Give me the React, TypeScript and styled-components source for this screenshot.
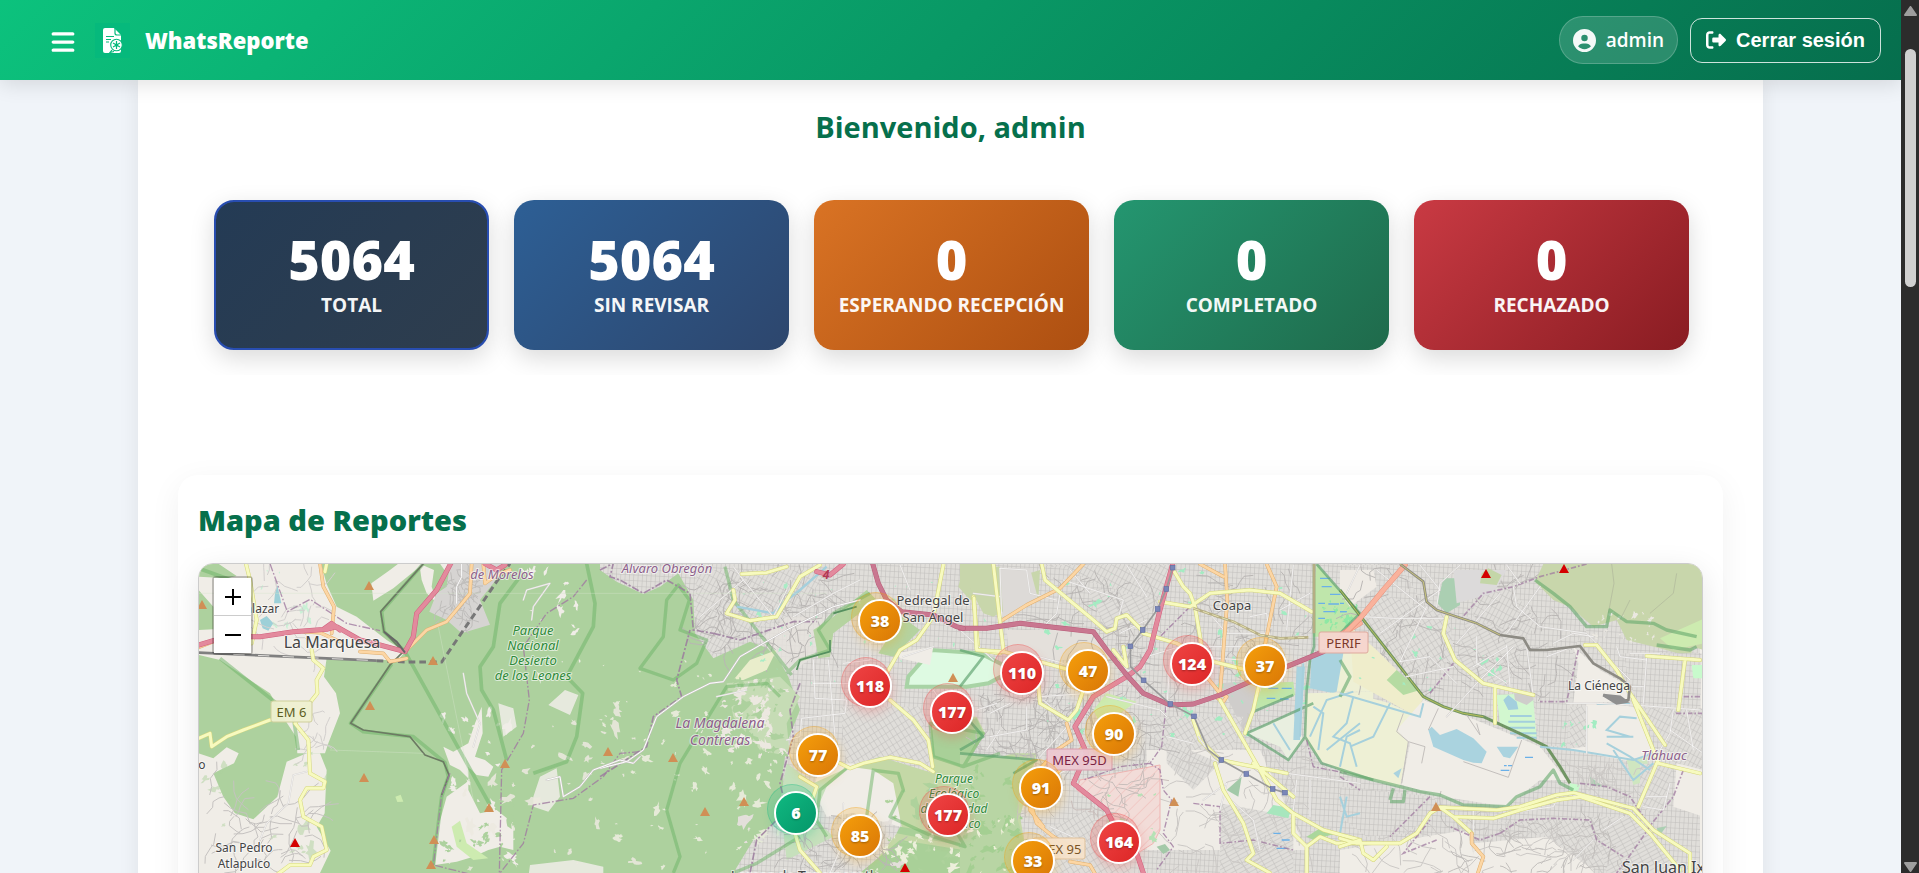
import React from "react";
import styled, { createGlobalStyle } from "styled-components";
import { FaBars, FaCircleUser, FaRightFromBracket } from "react-icons/fa6";

const sans = `"Open Sans", "Noto Sans", "Liberation Sans", sans-serif`;

const GlobalStyle = createGlobalStyle`
  *, *::before, *::after { box-sizing: border-box; }
  body { margin: 0; font-family: ${sans}; background: #f0f4f9; color: #333; }
  h1, h2, p, ul { margin: 0; padding: 0; }
`;

const Shell = styled.div`
  display: grid;
  grid-template-columns: minmax(0, 1fr) 18px;
  height: 100vh;
  overflow: hidden;
`;

const Page = styled.div`
  display: flex;
  flex-direction: column;
  min-width: 0;
  height: 100vh;
  overflow: hidden;
`;

const Header = styled.header`
  position: relative;
  z-index: 5;
  flex: none;
  display: flex;
  align-items: center;
  justify-content: space-between;
  height: 80px;
  padding: 0 20px 0 40px;
  color: #fff;
  background: linear-gradient(135deg, #0cc27d 0%, #066e4d 100%);
  box-shadow: 0 4px 20px rgba(0, 0, 0, 0.12);
`;

const HeaderGroup = styled.div<{ $gap: number }>`
  display: flex;
  align-items: center;
  gap: ${(p) => p.$gap}px;
`;

const MenuButton = styled.button`
  display: flex;
  padding: 14px 10px 10px;
  border: 0;
  background: none;
  color: #fff;
  font-size: 26px;
  cursor: pointer;
`;

const Brand = styled.a`
  display: flex;
  align-items: center;
  gap: 15px;
  color: #fff;
  font-size: 22px;
  font-weight: 800;
  line-height: 30px;
  text-decoration: none;
`;

const UserPill = styled.div`
  display: flex;
  align-items: center;
  gap: 10px;
  height: 48px;
  padding: 0 13px;
  border: 1px solid rgba(255, 255, 255, 0.2);
  border-radius: 25px;
  background: rgba(255, 255, 255, 0.15);
  font-size: 19px;
  font-weight: 600;

  svg { font-size: 23px; opacity: 0.95; }
`;

const LogoutButton = styled.button`
  display: flex;
  align-items: center;
  gap: 10px;
  height: 45px;
  padding: 0 15px;
  border: 1px solid rgba(255, 255, 255, 0.8);
  border-radius: 12px;
  background: transparent;
  color: #fff;
  font: bold 20px "Liberation Sans", Arial, sans-serif;
  cursor: pointer;
`;

const Scroll = styled.div`
  flex: 1;
  min-height: 0;
  overflow: hidden;
`;

const Content = styled.main`
  margin: 0 138px;
  padding: 24px 40px 40px;
  background: #fff;
  box-shadow: 0 0 20px rgba(0, 0, 0, 0.08);
`;

const Welcome = styled.h2`
  color: #06704c;
  font-size: 29px;
  font-weight: 700;
  line-height: 46px;
  text-align: center;
`;

const Stats = styled.section`
  display: grid;
  grid-template-columns: repeat(5, minmax(0, 1fr));
  gap: 25px;
  margin-top: 25px;
  padding: 25px 34px 25px 36px;
  overflow: hidden;
`;

const StatCard = styled.button<{ $from: string; $to: string; $active?: boolean }>`
  display: flex;
  flex-direction: column;
  align-items: center;
  justify-content: center;
  height: 150px;
  padding: 0 8px;
  border: 2px solid ${(p) => (p.$active ? "#284db0" : "transparent")};
  border-radius: 20px;
  background: linear-gradient(135deg, ${(p) => p.$from}, ${(p) => p.$to}) border-box;
  ${(p) => p.$active && `background: linear-gradient(135deg, ${p.$from}, ${p.$to}) padding-box, #284db0 border-box;`}
  box-shadow: 0 8px 25px rgba(0, 0, 0, 0.15);
  color: #fff;
  font-family: inherit;
  cursor: pointer;
`;

const StatValue = styled.span`
  font-size: 54px;
  font-weight: 800;
  line-height: 56px;
`;

const StatLabel = styled.span`
  margin-top: 4px;
  font-size: 19px;
  font-weight: 700;
  line-height: 28px;
  opacity: 0.95;
  white-space: nowrap;
`;

const MapCard = styled.section`
  margin-top: 100px;
  padding: 20px;
  border-radius: 20px;
  background: #fff;
  box-shadow: 0 8px 32px rgba(0, 0, 0, 0.06);
`;

const MapTitle = styled.h2`
  margin-bottom: 18px;
  color: #06704c;
  font-size: 29px;
  font-weight: 800;
  line-height: 50px;
`;

const MapFrame = styled.div`
  position: relative;
  height: 600px;
  overflow: hidden;
  border: 1px solid #ccc;
  border-radius: 15px;
  background: #f2efe9;
`;

const MapShadow = styled.div`
  border-radius: 15px;
  box-shadow: 0 8px 30px rgba(0, 0, 0, 0.1);
`;

const MapDrawing = styled.svg`
  display: block;
  width: 100%;
  height: 100%;
`;

const ZoomControl = styled.div`
  position: absolute;
  top: 12px;
  left: 13px;
  display: flex;
  flex-direction: column;
  border: 2px solid rgba(0, 0, 0, 0.22);
  border-radius: 4px;
  background-clip: padding-box;
`;

const ZoomButton = styled.button`
  width: 37px;
  height: 38px;
  padding: 0;
  border: 0;
  border-bottom: 1px solid #ccc;
  background: #fff;
  color: #000;
  display: grid;
  place-items: center;
  cursor: pointer;
  &:last-child { height: 37px; border-bottom: 0; }
`;

const tones = {
  red: { a: "#ef4444", b: "#dc2626", rgb: "239, 68, 68" },
  orange: { a: "#f59e0b", b: "#d97706", rgb: "245, 158, 11" },
  green: { a: "#10b981", b: "#059669", rgb: "16, 185, 129" },
};
type Tone = keyof typeof tones;

const Cluster = styled.button<{ $x: number; $y: number; $tone: Tone }>`
  position: absolute;
  left: ${(p) => p.$x}px;
  top: ${(p) => p.$y}px;
  width: 50px;
  height: 50px;
  padding: 6px 0 0 6px;
  border: 1px solid rgba(${(p) => tones[p.$tone].rgb}, 0.3);
  border-radius: 50%;
  background: rgba(${(p) => tones[p.$tone].rgb}, 0.18);
  cursor: pointer;

  span {
    display: grid;
    place-items: center;
    width: 44px;
    height: 44px;
    border: 2px solid #fff;
    border-radius: 50%;
    background: linear-gradient(135deg, ${(p) => tones[p.$tone].a}, ${(p) => tones[p.$tone].b});
    box-shadow: 0 4px 12px rgba(${(p) => tones[p.$tone].rgb}, 0.3);
    color: #fff;
    font: 800 16px ${sans};
    text-shadow: 0 1px 2px rgba(0, 0, 0, 0.3);
  }
`;

const ScrollRail = styled.aside`
  display: flex;
  flex-direction: column;
  align-items: center;
  justify-content: space-between;
  padding: 6px 0 1px;
  background: #2c2c2c;
`;

const Thumb = styled.div`
  width: 11px;
  height: 238px;
  margin: 33px 0 auto;
  border-radius: 6px;
  background: #d0d0d0;
`;

function Logo() {
  return (
    <svg width="35" height="35" viewBox="0 0 35 35" aria-hidden="true">
      <rect width="35" height="35" fill="#06b97c" />
      <path d="M10 5h9l7 7v16q0 2-2 2H10q-2 0-2-2V7q0-2 2-2z" fill="#fff" />
      <path d="M20 4v6q0 2 2 2h5" fill="none" stroke="#06b97c" strokeWidth="1.2" />
      <path d="M11 13.500h8M11 16.500h5M11 19h3" stroke="#06b97c" strokeWidth="1" />
      <circle cx="21.500" cy="22" r="5.800" fill="#fff" stroke="#06b97c" strokeWidth="1.100" />
      <path d="M21.500 18v8M18 20l7 4M25 20l-7 4M17 27l-2 2.500 4-1" stroke="#06b97c" strokeWidth="1.200" fill="none" />
      <circle cx="21.500" cy="22" r="1.600" fill="#06b97c" />
    </svg>
  );
}

/* ---------- Map drawing ---------- */

/* The map is drawn sheet by sheet; each sheet has its own origin and a 3:1 scale. */
const sheets = { west: "160 460", centre: "600 550", south: "960 550", east: "1340 550" };
type SheetName = keyof typeof sheets;

function Sheet({ at, children }: { at: SheetName; children: React.ReactNode }) {
  return <g transform={`translate(${sheets[at]}) scale(0.33333)`}>{children}</g>;
}

const roadKinds = {
  motorway: ["#d0607e", "#e38a9d", 15],
  ring: ["#b85c78", "#c97790", 15],
  trunk: ["#e8907a", "#f9b29c", 16],
  primary: ["#dfae6e", "#fcd6a4", 11],
  secondary: ["#d5d67c", "#f7fabf", 12],
  minor: ["#c9c6c4", "#ffffff", 6],
  lane: ["#d5d2cf", "#ffffff", 5],
} as const;

function Road({ kind, d }: { kind: keyof typeof roadKinds; d: string }) {
  const [edge, fill, w] = roadKinds[kind];
  return (
    <g fill="none" strokeLinejoin="round" strokeLinecap="round">
      <path d={d} stroke={edge} strokeWidth={w} />
      <path d={d} stroke={fill} strokeWidth={w - 3} />
    </g>
  );
}

/* Seeded generator, so that clearings and lanes are the same at each render. */
function makeRandom(seed: number) {
  let s = seed * 7919 + 13;
  return () => {
    s = (s * 16807) % 2147483647;
    return s / 2147483647;
  };
}

function blobs(seed: number, n: number, x0: number, y0: number, x1: number, y1: number, size: number) {
  const r = makeRandom(seed);
  let d = "";
  for (let i = 0; i < n; i++) {
    const cx = x0 + r() * (x1 - x0);
    const cy = y0 + r() * (y1 - y0);
    const k = size * (0.25 + r() * r() * 1.7);
    const tilt = r() * 3.1;
    for (let j = 0; j < 13; j++) {
      const a = (j / 13) * Math.PI * 2;
      const q = k * (0.3 + r() * 1.1);
      const u = Math.cos(a) * q * 1.4;
      const v = Math.sin(a) * q * 0.8;
      d += `${j ? "L" : "M"}${(cx + u * Math.cos(tilt) - v * Math.sin(tilt)).toFixed(0)} ${(cy + u * Math.sin(tilt) + v * Math.cos(tilt)).toFixed(0)}`;
    }
    d += "Z";
  }
  return d;
}

function lanes(seed: number, n: number, x0: number, y0: number, x1: number, y1: number, len: number) {
  const r = makeRandom(seed);
  let d = "";
  for (let i = 0; i < n; i++) {
    let x = x0 + r() * (x1 - x0);
    let y = y0 + r() * (y1 - y0);
    let a = r() * 6.28;
    d += `M${x.toFixed(0)} ${y.toFixed(0)}`;
    for (let j = 0; j < 4; j++) {
      a += (r() - 0.5) * 1.6;
      x += Math.cos(a) * len * (0.4 + r());
      y += Math.sin(a) * len * (0.4 + r());
      d += `L${x.toFixed(0)} ${y.toFixed(0)}`;
    }
  }
  return d;
}

function Grid({ id, angle, w, h }: { id: string; angle: number; w: number; h: number }) {
  return (
    <pattern id={id} width={w} height={h} patternUnits="userSpaceOnUse" patternTransform={`rotate(${angle})`}>
      <rect width={w} height={h} fill="#e0deda" />
      <path d={`M0 0H${w}M0 0V${h}`} stroke="#bfbdbb" strokeWidth="3" />
    </pattern>
  );
}

const peaks: [number, number, string?][] = [
  [369, 585], [202, 604], [433, 660], [370, 705], [364, 777], [505, 763], [489, 807], [434, 839], [431, 864],
  [608, 751], [673, 757], [705, 811], [744, 801], [953, 677], [1174, 801], [1436, 806],
  [295, 842, "#d40000"], [905, 867, "#d40000"], [1486, 573, "#d40000"], [1564, 568, "#d40000"],
];

const stations = "M638 53L619 117L593 177L548 240L511 289L512 350L551 391L631 462L702 499L745 600L784 630L859 672L938 717L975 728";
const stationDots = [[638, 53], [619, 117], [593, 177], [548, 240], [511, 289], [551, 391], [631, 462], [702, 499], [784, 630], [859, 672], [938, 717], [975, 728]];

interface LabelProps { x: number; y: number; size: number; fill?: string; italic?: boolean; lines: string[]; step?: number; anchor?: "start" | "middle" }
function Label({ x, y, size, fill = "#444", italic, lines, step = 15, anchor = "middle" }: LabelProps) {
  return (
    <text
      x={x} y={y} fontSize={size} fill={fill} textAnchor={anchor} fontStyle={italic ? "italic" : "normal"}
      stroke="#fff" strokeOpacity="0.6" strokeWidth="2" paintOrder="stroke" strokeLinejoin="round"
    >
      {lines.map((t, i) => <tspan key={t} x={x} y={y + i * step}>{t}</tspan>)}
    </text>
  );
}

function Shield({ x, y, w, text, fill, edge, ink }: { x: number; y: number; w: number; text: string; fill: string; edge: string; ink: string }) {
  return (
    <g>
      <rect x={x} y={y} width={w} height="21" rx="2" fill={fill} fillOpacity="0.95" stroke={edge} />
      <text x={x + w / 2} y={y + 16} fontSize="13" textAnchor="middle" fill={ink}>{text}</text>
    </g>
  );
}

function TerrainMap() {
  return (
    <MapDrawing viewBox="199 564 1503 598" preserveAspectRatio="xMinYMin slice" role="img" aria-label="Mapa" fontFamily={`"Noto Sans", sans-serif`}>
      <defs>
        <Grid id="g0" angle={3} w={13} h={17} />
        <Grid id="g1" angle={28} w={12} h={22} />
        <Grid id="g2" angle={-32} w={14} h={20} />
        <Grid id="g3" angle={62} w={12} h={28} />
        <pattern id="hatch" width="26" height="26" patternUnits="userSpaceOnUse" patternTransform="rotate(45)">
          <rect width="26" height="26" fill="#f2dcd8" />
          <path d="M0 0V26" stroke="#efb8b4" strokeWidth="3" />
        </pattern>
      </defs>
      <rect x="190" y="550" width="1530" height="620" fill="#f0ede7" />

      {/* Land cover */}
      <Sheet at="west">
        <path d="M116 311H2000V1900H116Z" fill="#add19e" />
        <path d="M175 311H483L500 372L530 440L590 470L680 540L735 575L715 600L600 600L500 595L492 650L528 700L540 760L505 850L495 880L412 880L408 830L375 780L330 700L180 600L116 585V510L160 508V440L116 390V350L200 355L230 348Z" fill="#f0ede7" />
        <path d="M116 880L160 895L200 862L236 880L222 910L160 940L190 1010L225 1060L280 1078L352 1010L380 905L440 880L480 880L500 930L494 1060L470 1100L512 1172L480 1239L300 1500H116Z" fill="#f0ede7" />
        <path d="M634 370L690 330L715 311H790L700 385L640 422ZM778 311L822 330L815 380L832 430L800 400L785 360ZM840 311L870 311L860 340Z" fill="#f0ede7" />
        <path d="M870 311H1035L1000 370L960 420L990 494L905 520L860 480L808 455L830 400L860 380Z" fill="#d6d4d2" />
        <path d="M850 860L880 875L925 850L945 790L965 740L968 820L945 890L975 900L1000 920L985 950L950 945L925 920L925 990L960 1060L1010 1050L1060 1090L1060 1170L1020 1160L985 1170L940 1190L890 1205L825 1215L835 1100L860 1010L930 960L900 930L870 915Z" fill="#f0ede7" />
        <path d="M875 1100L900 1082L920 1150L985 1195L940 1200L890 1160ZM706 1010L722 1004L730 1025L712 1026Z" fill="#cdebb0" />
        <path d="M1120 1010L1140 950L1190 925L1200 1010L1165 1055L1120 1040ZM1015 730L1060 745L1070 800L1030 830ZM1165 735L1215 690L1255 705L1230 765ZM1110 1215L1240 1200L1330 1220L1330 1290H1100Z" fill="#f0ede7" opacity="0.85" />
        <path d={blobs(7, 36, 870, 740, 1440, 1230, 12)} fill="#ece9df" opacity="0.85" />
        <path d={blobs(8, 30, 850, 760, 1080, 1210, 12)} fill="#f0ede7" />
        <path d={blobs(9, 18, 850, 960, 1080, 1210, 11)} fill="#add19e" />
        <path d={blobs(19, 16, 1080, 330, 1290, 690, 8)} fill="#f0ede7" />
        <path d={blobs(3, 16, 120, 860, 500, 1220, 12)} fill="#add19e" opacity="0.5" />
        <path d={blobs(31, 12, 300, 330, 460, 520, 9)} fill="#c9f0d5" />
        <path d="M300 480L320 468L340 490L325 512L308 505ZM345 400L352 375L364 430L342 430Z" fill="#9dd0d8" />
        <path d={lanes(11, 40, 130, 1000, 470, 1230, 26)} fill="none" stroke="#c5c2c0" strokeWidth="3" />
        <path d={lanes(12, 26, 300, 330, 480, 580, 22)} fill="none" stroke="#d2cfcd" strokeWidth="3" />
        <path d={lanes(14, 12, 430, 750, 500, 870, 18)} fill="none" stroke="#d2cfcd" strokeWidth="3" />
        <path d={lanes(13, 44, 850, 330, 960, 490, 14)} fill="none" stroke="#bfbdbb" strokeWidth="3" />
      </Sheet>
      <Sheet at="centre">
        <path d="M0 40H3300V1900H1100L560 1400L400 969L460 870L555 790L548 670L560 580L600 480L565 380L520 300L450 275L340 325L285 250L280 150L235 70L180 110L130 132L50 95L0 60Z" fill="url(#g0)" />
        <path d="M290 60H700L560 200L400 260L340 320L285 240Z" fill="url(#g1)" />
        <path d="M720 470H960L1000 640L740 650Z" fill="url(#g2)" />
        <path d="M480 270L560 200L690 200L640 320L570 370Z" fill="#e6e2dd" opacity="0.8" />
        <path d={lanes(81, 60, 300, 60, 680, 320, 26)} fill="none" stroke="#b9b6b4" strokeWidth="3" />
        <path d="M400 390L450 330L530 300L500 360L430 390Z" fill="#e9edcb" />
        <path d="M380 400L540 380L600 440L560 520L570 620L480 600L400 500Z" fill="#c6dcb5" />
        <path d={blobs(41, 60, 370, 390, 560, 620, 12)} fill="#ece8e0" />
        <path d={blobs(42, 30, 370, 390, 560, 620, 12)} fill="#add19e" />
        <path d={blobs(43, 40, 0, 330, 340, 969, 9)} fill="#e6ead8" />
        <path d={blobs(44, 20, 380, 600, 560, 900, 12)} fill="#e6ead8" />
        <path d="M835 310L905 200L960 240L880 320ZM640 240L700 200L800 120L830 150L700 250L690 320L655 325Z" fill="#b5d3a0" />
        <path d="M660 650L750 640L880 660L905 700L900 830L760 790L680 800L640 720Z" fill="#f0ede7" />
        <path d="M560 640L640 700L750 650L680 710L640 800L700 860L560 930L540 760Z" fill="#c6e0bc" />
        <path d="M750 650L840 620L1000 670L990 500L1130 500L1155 550L1090 655L1240 610H1310L1260 800L1290 969H800L905 830L880 700L820 660Z" fill="#c4d8a6" />
        <path d="M995 540L1130 505L1150 550L1080 650L1000 620ZM900 830L1100 860L1100 890L890 850ZM780 969L900 870L1090 900L1200 880L1290 969Z" fill="#a9d098" />
        <path d={blobs(47, 50, 860, 690, 1270, 960, 15)} fill="#aed29c" />
        <path d={blobs(48, 34, 780, 850, 1270, 969, 12)} fill="#ecefdb" />
        <path d={blobs(49, 20, 420, 800, 900, 969, 13)} fill="#e3dfda" />
        <path d={lanes(82, 46, 590, 820, 860, 969, 22)} fill="none" stroke="#bab7b5" strokeWidth="3" />
        <path d={lanes(83, 40, 1140, 590, 1320, 800, 20)} fill="none" stroke="#c5c1bf" strokeWidth="3" />
        <path d="M925 380L995 300L1140 310L1180 330L1240 360L1165 400L1100 410L920 410Z" fill="#defae2" stroke="#a8d3a5" strokeWidth="12" />
        <path d="M890 310L1000 290L990 345L900 325Z" fill="#f0ede7" />
        <path d="M1090 50H1200V130L1110 150L1075 110Z" fill="#c8d6ab" />
        <path d={blobs(51, 36, 350, 60, 1200, 400, 6)} fill="#a9ecc5" />
      </Sheet>
      <Sheet at="south">
        <path d="M250 45H640L590 150L400 100L330 60Z" fill="url(#g1)" />
        <path d="M380 110L600 150L520 240L440 240Z" fill="url(#g3)" />
        <path d="M780 400L900 390L880 480L850 540Z" fill="#cfcdcb" />
        <path d="M140 240H390L470 330H150Z" fill="#e4e0db" />
        <path d="M570 500H850L800 640H600Z" fill="url(#g2)" />
        <path d="M560 600H900L1040 900H560Z" fill="#efece6" />
        <path d="M620 570L780 640L700 720L620 640Z" fill="url(#g1)" />
        <path d="M780 760L1000 800V969H780Z" fill="url(#g3)" />
        <path d={lanes(84, 90, 60, 430, 580, 640, 22)} fill="none" stroke="#b9b6b4" strokeWidth="3" />
        <path d={lanes(85, 70, 250, 60, 1040, 400, 26)} fill="none" stroke="#b9b6b4" strokeWidth="3" />
        <path d={lanes(86, 60, 620, 560, 1040, 960, 24)} fill="none" stroke="#cbc8c5" strokeWidth="3" />
        <path d="M360 690L600 645V840L580 880L540 905L450 790L350 720Z" fill="url(#hatch)" stroke="#eeb4b2" strokeWidth="3" />
        <path d={lanes(87, 26, 380, 670, 580, 800, 24)} fill="none" stroke="#c9bebb" strokeWidth="3" />
        <path d="M0 42H100L110 100L240 60L235 150L160 165L100 200L70 190L30 115H0Z" fill="#c8d6ab" />
        <path d="M120 55H210L235 150L130 200Z" fill="#dddad7" />
        <path d="M0 610L230 630L180 700L170 800L200 900L150 969H0Z" fill="#b8d5a4" />
        <path d={blobs(61, 40, 0, 640, 200, 969, 13)} fill="#a4cf92" />
        <path d={blobs(62, 14, 20, 800, 200, 969, 9)} fill="#edf0d8" />
        <path d="M240 850L380 780L480 900L520 969H240Z" fill="url(#g2)" />
        <path d="M400 480L440 430L530 455L480 490L420 520Z" fill="#cdebb0" />
        <path d={blobs(63, 60, 250, 60, 1050, 560, 7)} fill="#a3ecc2" />
        <path d={blobs(64, 14, 430, 700, 590, 900, 8)} fill="#b5e2b5" />
        <path d="M1070 42L1200 190L1125 260H1060V140Z" fill="#bfe6ab" />
        <path d="M880 480L910 400L1000 395L1005 435Z" fill="#bfe6ab" />
        <path d="M1055 310L1170 290V400L1120 430L1050 415Z" fill="#aad3df" />
        <path d="M1150 310H1240V425L1130 425Z" fill="#eef0d5" />
        <path d="M1040 430L1240 425V690L1140 660L1085 635L1035 570Z" fill="#eef0d5" />
        <path d="M860 550L1000 490L1030 570L985 630L960 590Z" fill="#e9efe0" />
        <path d="M1010 350H1035L1020 570H1000Z" fill="#aad3df" />
        <path d={blobs(65, 26, 1080, 150, 1190, 240, 7)} fill="#8ee8a4" />
        <path d="M1080 85h30M1085 110h30M1110 133h32M1075 160h20M1105 162h32M1090 185h36M1140 185h20M1075 205h20M925 415h30M965 415h30M920 445h26M960 447h26M940 850h22M965 870h24M950 895h30" stroke="#6ab0e8" strokeWidth="4" />
        <path d="M590 890L615 882L630 900L610 912ZM800 720L845 680L835 740Z" fill="#a3c9a8" />
        <path d="M920 790L940 765L995 775L985 805Z" fill="#a7e6bd" />
        <path d="M1040 860L1080 835L1130 850L1060 870Z" fill="#aad79c" />
      </Sheet>
      <Sheet at="east">
        <path d="M0 42H620L740 240L700 290L560 290L540 265L260 180L180 45H0Z" fill="url(#g0)" />
        <path d="M120 130L330 200L340 330L200 370L60 210Z" fill="url(#g2)" />
        <path d="M380 200L560 260L500 420L350 340Z" fill="url(#g3)" />
        <path d="M400 150L500 110L600 210L560 260L400 210Z" fill="url(#g1)" />
        <path d="M560 300H700L680 590L600 585L580 430Z" fill="url(#g0)" />
        <path d="M700 290L780 360L850 400L870 460L820 455L740 460L700 460L715 340ZM740 460H800L880 470L940 590L900 640L690 600Z" fill="#f0ede7" />
        <path d="M690 470H740V590L690 595Z" fill="url(#g2)" />
        <path d="M0 60L100 60L110 110L30 170L0 130Z" fill="#efebe5" />
        <path d={lanes(88, 60, 60, 60, 700, 420, 26)} fill="none" stroke="#bab7b5" strokeWidth="3" />
        <path d="M310 85H360V165L320 190L292 160ZM750 680L790 710L755 705ZM950 835L980 828L960 855Z" fill="#abcfb2" />
        <path d="M340 60H500L460 130L350 160Z" fill="#dcdada" />
        <path d="M425 70L445 55L485 75L470 105L420 100Z" fill="#c4d6a8" />
        <path d="M610 42H1090V300L1060 290L1050 320L960 295L860 270L830 210L760 230L690 170L640 150L585 95Z" fill="#c8d6ab" />
        <path d="M960 265L1090 207V280L1000 300Z" fill="#cdebb0" />
        <path d={blobs(71, 26, 760, 190, 960, 280, 8)} fill="#ebe8e1" />
        <path d="M30 230L110 300L250 440L230 500L40 395Z" fill="#efedcb" />
        <path d="M140 390L170 360L240 420L190 435Z" fill="#b5dba2" />
        <path d="M0 420L150 460L230 500L170 540L205 575L180 710L0 665Z" fill="#eef0d5" />
        <path d="M250 450L370 495L480 540L600 590L680 690L600 690L500 770L310 740L185 705L210 580L170 540Z" fill="#f0ede7" />
        <path d="M265 540L275 530L300 555L350 537L400 565L440 605L425 640L400 638L370 630L280 590ZM470 590L535 590L510 625L490 620ZM160 670L185 655L175 685Z" fill="#aad3df" />
        <path d="M470 435L525 432L580 450L590 565L480 520Z" fill="#d2f7cf" />
        <path d="M490 450L505 435L530 455L535 478L505 480ZM510 495h65v6h-65zM505 512h80v6h-80zM505 530h80v6h-80zM510 547h80v6h-80zM530 560h60v6h-60z" fill="#a3cfdd" />
        <path d="M522 430H580V450L560 465L525 450Z" fill="#cfcdcb" />
        <path d="M860 630L920 620L930 690L880 705Z" fill="#cfe6c0" />
        <path d="M850 310H1085L1080 540H1000L900 470L870 400Z" fill="url(#g0)" />
        <path d="M910 475H1090V700L1000 640Z" fill="url(#g1)" />
        <path d="M1010 640L1090 660V800L1000 770Z" fill="#f0ede7" />
        <path d="M900 640L1000 650L960 800L900 770Z" fill="url(#g1)" />
        <path d="M0 710L280 740L300 775L200 850L80 860L0 800Z" fill="url(#g0)" />
        <path d="M440 820L760 800L830 930L700 980L620 860L540 820Z" fill="url(#g2)" />
        <path d="M760 800L880 800L960 900L1080 969H800Z" fill="url(#g3)" />
        <path d="M0 900L380 840L420 980L400 1700H0Z" fill="#f0ede7" />
        <path d="M400 880L620 860L760 960L700 1700H400Z" fill="#f0ede7" />
        <path d="M1055 345H1090V385H1060ZM690 700L720 705L712 728L688 722Z" fill="#c8facc" />
        <path d={blobs(73, 18, 20, 230, 500, 420, 8)} fill="#a3ecc2" />
        <path d={blobs(75, 10, 660, 510, 780, 590, 7)} fill="#a3ecc2" />
        <path d={lanes(76, 50, 20, 850, 800, 1000, 30)} fill="none" stroke="#ccc9c6" strokeWidth="3" />
        <path d={lanes(89, 50, 300, 790, 860, 969, 20)} fill="none" stroke="#c2bfbc" strokeWidth="3" />
        <path d={lanes(90, 26, 700, 640, 900, 760, 18)} fill="none" stroke="#cbc8c5" strokeWidth="3" />
        <path d="M815 42L822 100L805 190M1010 70L1000 130L930 190M870 150L840 210" fill="none" stroke="#b7c0a0" strokeWidth="3" />
      </Sheet>

      {/* Water lines, park edges and boundaries */}
      <Sheet at="west">
        <path d="M116 325L240 370M790 311L665 455L672 515L735 575L990 1035M695 612L572 790L610 815L760 830L855 908L865 950L845 1010L820 1215M180 595L400 770L415 870M1080 350L1020 430L1000 560L960 620L965 690L1000 750L1040 900M1280 311L1305 430L1300 500L1220 650L1268 700L1250 830L1220 905L1120 940" fill="none" stroke="#6cb465" strokeWidth="11" opacity="0.5" strokeLinejoin="round" />
        <path d="M790 311L662 455L672 515L730 575L690 615L572 790L610 810L750 830L795 885L850 905L867 945L845 1005" fill="none" stroke="#6c7a63" strokeWidth="5" strokeLinejoin="round" />
        <path d="M330 311L382 455L450 418L560 490L660 512M870 940L845 1005L820 1215L1000 1260M1280 360L1240 410L1160 460L1090 560L1108 720L1090 820L1025 930L1018 1239M1440 875L1380 880L1330 950L1240 1015L1120 1035L1090 1150L1020 1239" fill="none" stroke="#a07ba0" strokeWidth="4" strokeDasharray="24 6 5 6" opacity="0.8" />
        <path d="M650 602L740 606H845L1010 365L1050 311" fill="none" stroke="#777" strokeWidth="9" strokeDasharray="20 12" />
        <path d="M116 578L650 602" fill="none" stroke="#808080" strokeWidth="8" />
        <path d="M220 583L650 602" fill="none" stroke="#e0dedb" strokeWidth="3" strokeDasharray="34 40" />
      </Sheet>
      <Sheet at="centre">
        <path d="M235 105L268 150L240 240L320 270L290 340L220 390L120 355L190 260L200 150ZM375 50L400 150L575 375M560 370L600 330L690 300L655 240L700 190L810 130M540 440L500 400L380 410L240 640L200 780L240 920L220 969M740 655L660 720L650 810L680 860M815 660L895 670L910 720L870 800L1000 860L1095 890L1060 830M800 800L820 660M990 520L1150 550L1090 650L1000 620ZM1090 650L1200 610M400 969L470 940L600 860" fill="none" stroke="#6cb465" strokeWidth="10" opacity="0.5" strokeLinejoin="round" />
        <path d="M0 60L40 40L30 80L60 90L130 130L200 90L270 130L280 240L340 250M0 680L140 590L160 500L245 440L230 390L270 240M600 400L570 480L580 560L540 700L560 780L470 870L450 969M340 250L420 270L580 215L650 215" fill="none" stroke="#9b7b9e" strokeWidth="5" strokeDasharray="22 6 6 6" opacity="0.85" />
        <path d="M410 170L520 190L560 150L600 120L680 50" fill="none" stroke="#a5cfdc" strokeWidth="7" />
        <path d="M590 360L600 330L690 305L690 270M700 190L770 170" fill="none" stroke="#55905f" strokeWidth="5" />
      </Sheet>
      <Sheet at="south">
        <path d="M1070 42L1200 190M1062 42V290L1050 330L1040 420L1035 560L985 630L860 550L1060 460M880 485L1000 435M1035 560L1085 640L1240 690M1200 190L1140 250M0 600L70 560L0 480M0 610L230 630L160 670M0 300L70 320L0 410" fill="none" stroke="#5b9f6b" strokeWidth="8" opacity="0.65" strokeLinejoin="round" />
        <path d="M618 470L605 590L570 640L600 660L610 720L635 750L610 850L640 890L590 960M690 170L590 270M570 640L480 650L370 690M700 760L780 770V880L880 870L1000 900M1040 570L1060 650L1160 670" fill="none" stroke="#a07ba0" strokeWidth="4" strokeDasharray="18 6 5 6" opacity="0.8" />
        <path d="M1050 560L1100 450L1180 425M1060 470L1090 490L1075 600M1100 600L1200 520M1140 650L1160 560L1200 540M1020 560L1030 340M940 520L990 600M1140 740L1160 800L1200 790M1140 850L1160 740" fill="none" stroke="#a6d0dc" strokeWidth="6" />
      </Sheet>
      <Sheet at="east">
        <path d="M585 90L640 130L690 170L740 230L800 230L810 180L860 215L940 220L980 240L1070 260M950 285L1050 300L1070 290M0 665L180 710L240 725L300 735L370 765L500 770L530 740L600 710L640 660L660 700L700 720M0 440L30 380L0 330M150 750L160 715M195 720L190 755H150" fill="none" stroke="#64a86c" strokeWidth="10" opacity="0.6" strokeLinejoin="round" />
        <path d="M0 120L250 440L310 470L370 490L430 500L560 560L620 590L660 650L690 700" fill="none" stroke="#5e8a50" strokeWidth="9" opacity="0.85" />
        <path d="M0 120L250 440L310 470L370 490L430 500" fill="none" stroke="#b9bf5a" strokeWidth="3" />
        <path d="M40 440L20 520L-20 560L30 580L50 650M150 460L100 560L30 590M0 430L240 500L250 460M600 590L700 600L880 630L940 610M770 462H870M870 560L800 540L840 500L890 505M800 580L870 620L930 660M880 560L800 560M820 600L880 690L940 640" fill="none" stroke="#a6d0dc" strokeWidth="6" />
        <path d="M740 42L600 80L520 110L430 130L360 210M340 340L270 430M715 300L680 455L600 455M720 700L800 710L870 740L930 830L860 930L830 969M1090 490H1000M1080 440H1030M0 680L60 720M270 740L150 860M290 870L190 910L270 810M480 850L420 870L330 830M480 850L540 810L640 805L750 810L770 870L850 920M1030 660L1000 740L920 840" fill="none" stroke="#a07ba0" strokeWidth="5" strokeDasharray="16 6 5 6" opacity="0.75" />
        <path d="M190 490L170 545L205 575L185 700M295 475L265 540M380 495L420 555L410 520M545 570L505 682L370 635M205 575L255 590L245 640" fill="none" stroke="#c3bfbc" strokeWidth="3" />
        <path d="M555 622h24M492 647h8M504 647h12M482 661h26M0 160h12M0 185h20" stroke="#6ab0e8" strokeWidth="4" />
      </Sheet>

      {/* Roads */}
      <Sheet at="centre">
        <Road kind="minor" d="M0 655L80 635L130 600L170 500L250 440L330 400L370 395L420 320L560 240L700 170L780 150" />
        <Road kind="lane" d="M300 200L430 90L400 50M430 90L520 200L560 120M580 200L700 130L780 90M640 330L645 445L740 450L735 490L605 505L600 560L560 570M685 330L705 560L700 640M640 400H750M810 280V330L730 340" />
        <Road kind="lane" d="M900 45L930 120M1000 420L1020 450M1160 600L1200 540M730 760L720 900L690 969M440 420L350 440M910 320L1000 290M1120 130L1200 140" />
        <Road kind="secondary" d="M400 120L405 150L380 190L450 212L530 200L560 150L600 80L660 45M425 72L500 68L560 50M860 370L900 300L950 270L1000 200L1030 45M1120 140L1135 300L1200 310M870 450L940 510L985 570L998 650M720 640L750 655L790 640L870 622L960 640L1000 665M600 680L650 710L640 740M585 850L600 900L660 969" />
      </Sheet>
      <Sheet at="south">
        <Road kind="lane" d="M120 55L125 200M120 55L200 60L210 130L290 150M300 130L290 190L250 230M310 90L490 150L470 220M330 60L390 130M480 250L560 210M500 45L560 140M130 310H200L310 340M440 440L600 480L620 500M630 330L620 480M560 320L660 290L860 290M700 320L850 330M870 200L920 190L930 260M1000 45L980 240M1050 130L960 180M740 180L800 250H920M240 440L390 430M50 480L110 460M250 450L330 520L240 620M150 460L90 490M200 470V540L90 560M300 580L260 690L340 650M270 830L380 880M620 560L700 580M980 670L1200 700M1050 690V800M1010 690L1000 780M730 750L800 700L780 780M800 740L880 810L900 900M0 240L100 330" />
        <Road kind="primary" d="M120 215L200 165L300 115L370 42M720 42L790 80M795 42L802 150L780 430M920 42L950 110L912 300M780 430L800 440L790 455L765 440ZM780 430L700 330M320 520L335 570L290 600L220 680L210 780L250 830M200 720L230 820L280 860L330 890M330 935L390 945L410 980M270 690L370 590" />
        <Road kind="secondary" d="M42 145L50 300L130 305L330 360M100 42L130 300M245 42L255 90L400 210L440 245L465 235L470 205L500 195L550 245M600 155L690 170L750 130L870 120L960 130L1055 185M640 60L670 110L690 130L705 170L725 290M550 250L650 280L740 330L860 360M370 420L350 480L325 510L240 460L235 400M900 390L880 480L855 550M780 450L900 660L950 750L1000 790L1090 840L1200 870M700 510L720 570L780 630L980 670M765 640L790 720L850 820L880 910L860 930L930 969M880 640L1000 740M1000 790L1000 850L1040 890L1040 969M1040 890L1080 860L1130 880H1200M490 290L500 350L460 300" />
        <Road kind="lane" d="M715 560L735 590M470 340L520 370" />
        <Road kind="motorway" d="M638 42L600 180L570 300L540 350L500 380L400 440L345 530L380 610L340 700L440 780L460 820L520 880L550 969" />
        <Road kind="ring" d="M0 235H80L180 220L280 232L400 245L440 300L500 375L550 430L630 465L700 462L780 435L870 395L980 350L1090 305" />
        <Road kind="trunk" d="M1150 250L1200 220" />
        <path d="M700 175L820 215L900 255L960 265L1045 262M1062 42V250" fill="none" stroke="#b5ad83" strokeWidth="8" />
        <path d="M700 175L820 215L900 255L960 265L1045 262" fill="none" stroke="#e6e2b4" strokeWidth="3" strokeDasharray="20 10" />
        <path d={stations} fill="none" stroke="#9a9a9a" strokeWidth="5" />
        {stationDots.map(([x, y]) => <rect key={`${x}-${y}`} x={x - 7} y={y - 7} width="14" height="14" fill="#7a86b8" stroke="#6270a3" strokeWidth="2" />)}
      </Sheet>
      <Sheet at="centre">
        <Road kind="ring" d="M815 30L835 100L860 150L905 185L1000 195L1070 230L1090 235" />
        <Road kind="motorway" d="M650 65L690 75L730 42" />
      </Sheet>
      <Sheet at="east">
        <Road kind="lane" d="M60 45L20 130M110 60L260 180M290 170L300 100L360 45M240 45L300 120L120 250M260 170L180 335M70 200L160 205L310 205M180 335L270 320L350 400M200 380L340 350M480 130L350 280M600 110L500 250M520 110L530 170L600 230L740 250L770 280M640 280L700 250L760 260M500 45L540 100M410 260V340L500 400M500 290L400 350M500 285L510 410M560 290L580 440M520 290L410 400L320 500M620 320L700 290M870 310H960M920 320L910 460M870 410H910M680 460H770L880 465L1080 480M1000 480L990 550L960 600M990 540L1090 610M1040 480L1060 600M400 780V850M655 740L640 770L500 790M850 800L790 840M760 870L700 930M990 700L970 780L910 770M920 740L980 740M740 470V610M770 290L870 390M830 290L840 320L920 330" />
        <Road kind="secondary" d="M320 200L310 250L345 330L430 400L580 435M465 415V520M735 285H770L830 360L870 430L975 585M880 450L940 600L955 640L1080 670M950 640L895 770M920 318L1080 330M1035 330L1015 480M0 865L50 880H180L230 850L270 790L300 772L470 780L540 770L650 735L700 728L880 775L940 840L1050 910V969M340 800L460 805L540 780L650 750L720 740L870 790L930 850L1020 960M300 772L340 800L395 850M0 890L60 870L70 910L100 930L140 890" />
        <Road kind="primary" d="M395 850V880L430 920L410 980" />
        <Road kind="trunk" d="M0 265L60 205L130 120L195 45" />
        <path d="M180 42L250 95L260 155L290 180L350 200L410 220L480 255L550 265L570 300H620L720 288L760 340L840 385L870 410L865 450L835 455L790 435" fill="none" stroke="#8d8b84" strokeWidth="8" strokeLinejoin="round" />
        <path d="M180 42L250 95L260 155L290 180L350 200L410 220L480 255" fill="none" stroke="#c9c57b" strokeWidth="3" />
        <path d="M790 435L840 440L860 455L830 460Z" fill="#8f8f8f" stroke="#8f8f8f" strokeWidth="8" />
      </Sheet>
      <Sheet at="west">
        <Road kind="lane" d="M440 935L400 945L385 1030L320 1090L300 1140M1090 420L1100 390L1170 370L1120 440L1115 480M910 640L920 700L960 790L940 860" />
        <path d="M835 500L940 1020M790 880L510 870M116 400H2000" fill="none" stroke="#d6e6cc" strokeWidth="2" opacity="0.6" />
        <Road kind="minor" d="M905 311V350L890 380V430M1160 960L1200 950L1210 1010L1260 980L1300 930L1380 900L1420 910L1440 890" />
        <Road kind="secondary" d="M258 311L270 360L290 480L275 550M500 311L495 335M455 570L460 600L490 625L470 660L472 700L440 740L405 790L445 840L450 940L495 965L490 985L440 985L420 1020L430 1070L485 1100L500 1170L460 1190L450 1215L390 1215L330 1260M330 780L250 810L200 830L155 860L150 820L116 835" />
        <Road kind="primary" d="M480 311L490 380L522 440L515 520M430 515L480 518L540 545M600 575L670 580L690 605L740 595M740 570L800 510L860 485L910 425L930 400L935 311M970 311L975 370L1010 345L1050 330M116 562L160 545" />
        <Road kind="motorway" d="M116 555L200 530L300 530L400 515L500 508L530 500L600 540L660 555L735 575L760 530L770 460L830 390L872 311M490 508L515 490L540 510M975 311L1010 330L1035 315" />
        <path d="M672 515L710 545L735 578" stroke="#666" strokeWidth="6" fill="none" />
      </Sheet>

      {peaks.map(([x, y, c]) => <path key={`${x}-${y}`} d={`M${x} ${y - 4}l5 9h-10z`} fill={c || "#d08f55"} />)}

      <Label x={259} y={613} size={12} lines={["Salazar"]} />
      <Label x={332} y={648} size={16} lines={["La Marquesa"]} />
      <Label x={502} y={579} size={13} fill="#8d618b" italic lines={["de Morelos"]} />
      <Label x={667} y={573} size={13} fill="#8d618b" italic lines={["Álvaro Obregón"]} />
      <Label x={533} y={635} size={13} fill="#2f8a3a" italic lines={["Parque", "Nacional", "Desierto", "de los Leones"]} />
      <Label x={720} y={728} size={14} fill="#8d618b" italic lines={["La Magdalena", "Contreras"]} step={17} />
      <Label x={933} y={605} size={13} lines={["Pedregal de", "San Ángel"]} step={17} />
      <Label x={1232} y={610} size={13} lines={["Coapa"]} />
      <Label x={1599} y={690} size={12} lines={["La Ciénega"]} />
      <Label x={1664} y={760} size={13} fill="#8d618b" italic lines={["Tláhuac"]} />
      <Label x={244} y={852} size={12} lines={["San Pedro", "Atlapulco"]} step={16} />
      <Label x={202} y={769} size={12} lines={["o"]} />
      <Label x={954} y={783} size={12} fill="#2f8a3a" italic lines={["Parque", "Ecológico", "de la Ciudad", "de México"]} />
      <Label x={1622} y={873} size={16} anchor="start" lines={["San Juan Ixtayopan"]} />
      <Label x={802} y={881} size={14} lines={["Lomas de Tepemecatl"]} />
      <text x={826} y={579} fontSize="12" fontWeight="700" fontStyle="italic" textAnchor="middle" fill="#b03a55">4</text>
      <Shield x={271} y={701} w={41} text="EM 6" fill="#eef0d0" edge="#cfcf9a" ink="#5c5c1e" />
      <Shield x={1319} y={632} w={49} text="PERIF" fill="#f6d5cd" edge="#dfa99d" ink="#7a382a" />
      <Shield x={1047} y={749} w={65} text="MEX 95D" fill="#ecc8d2" edge="#d79cab" ink="#7a2143" />
      <Shield x={1033} y={838} w={52} text="MEX 95" fill="#f6e2ca" edge="#dfc19b" ink="#7a5426" />
    </MapDrawing>
  );
}

const stats = [
  { value: 5064, label: "TOTAL", from: "#243b55", to: "#2e3d4d", active: true },
  { value: 5064, label: "SIN REVISAR", from: "#2d5f95", to: "#2d466d" },
  { value: 0, label: "ESPERANDO RECEPCIÓN", from: "#d97324", to: "#ad4f11" },
  { value: 0, label: "COMPLETADO", from: "#249670", to: "#1f6a4b" },
  { value: 0, label: "RECHAZADO", from: "#c93a43", to: "#891c22" },
];

const clusters: [number, number, number, Tone][] = [
  [652, 28, 38, "orange"], [642, 93, 118, "red"], [724, 119, 177, "red"], [590, 162, 77, "orange"],
  [568, 220, 6, "green"], [632, 243, 85, "orange"], [720, 222, 177, "red"], [794, 80, 110, "red"],
  [860, 78, 47, "orange"], [964, 71, 124, "red"], [1037, 73, 37, "orange"], [886, 141, 90, "orange"],
  [813, 195, 91, "orange"], [891, 249, 164, "red"], [805, 268, 33, "orange"],
];

export default function App() {
  return (
    <Shell>
      <GlobalStyle />
      <Page>
        <Header>
          <HeaderGroup $gap={9}>
            <MenuButton type="button" aria-label="Menú"><FaBars /></MenuButton>
            <Brand href="#inicio"><Logo />WhatsReporte</Brand>
          </HeaderGroup>
          <HeaderGroup $gap={12}>
            <UserPill><FaCircleUser />admin</UserPill>
            <LogoutButton type="button"><FaRightFromBracket />Cerrar sesión</LogoutButton>
          </HeaderGroup>
        </Header>
        <Scroll>
          <Content>
            <Welcome>Bienvenido, admin</Welcome>
            <Stats>
              {stats.map((s) => (
                <StatCard key={s.label} type="button" $from={s.from} $to={s.to} $active={s.active}>
                  <StatValue>{s.value}</StatValue>
                  <StatLabel>{s.label}</StatLabel>
                </StatCard>
              ))}
            </Stats>
            <MapCard>
              <MapTitle>Mapa de Reportes</MapTitle>
              <MapShadow>
                <MapFrame>
                  <TerrainMap />
                  {clusters.map(([x, y, n, tone]) => (
                    <Cluster key={`${x}-${y}`} type="button" $x={x} $y={y} $tone={tone}><span>{n}</span></Cluster>
                  ))}
                  <ZoomControl>
                    <ZoomButton type="button" aria-label="Acercar">
                      <svg width="16" height="16"><path d="M0 8h16M8 0v16" stroke="#000" strokeWidth="2" /></svg>
                    </ZoomButton>
                    <ZoomButton type="button" aria-label="Alejar">
                      <svg width="16" height="16"><path d="M0 8h16" stroke="#000" strokeWidth="2" /></svg>
                    </ZoomButton>
                  </ZoomControl>
                </MapFrame>
              </MapShadow>
            </MapCard>
          </Content>
        </Scroll>
      </Page>
      <ScrollRail aria-hidden="true">
        <svg width="13" height="10"><path d="M6.500 1L12 9H1z" fill="#9e9e9e" stroke="#9e9e9e" strokeWidth="2" strokeLinejoin="round" /></svg>
        <Thumb />
        <svg width="13" height="10"><path d="M6.500 9L12 1H1z" fill="#9e9e9e" stroke="#9e9e9e" strokeWidth="2" strokeLinejoin="round" /></svg>
      </ScrollRail>
    </Shell>
  );
}
